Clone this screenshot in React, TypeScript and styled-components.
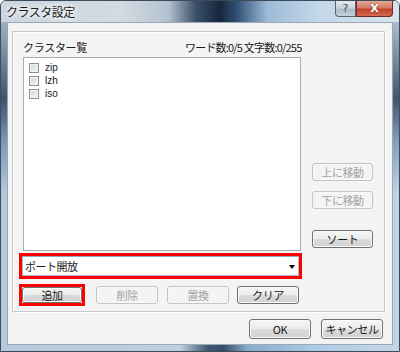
import React from "react";
import styled, { createGlobalStyle } from "styled-components";

const Global = createGlobalStyle`
  html, body { margin: 0; padding: 0; background: #ffffff; }
  body { font-family: "Noto Sans CJK JP", "Noto Sans", sans-serif; }
  * { box-sizing: border-box; }
`;

const FONT = `"Noto Sans CJK JP", "Noto Sans", sans-serif`;

const Window = styled.div`
  width: 400px;
  height: 352px;
  display: flex;
  flex-direction: column;
  border: 1px solid #3c4b5a;
  border-radius: 6px 6px 0 0;
  background:
    linear-gradient(180deg, rgba(20, 40, 70, 0.0) 0%, rgba(20, 40, 70, 0.75) 28%, rgba(60, 100, 150, 0.5) 40%, rgba(150, 190, 225, 0.2) 55%, rgba(170, 200, 230, 0.2) 100%),
    linear-gradient(90deg, #b9cbdb 0%, #c3d2df 45%, #243a55 52%, #1b2f48 56%, #7fa4c6 62%, #b2cde4 80%, #c9d9e6 100%);
  overflow: hidden;
`;

const TitleBar = styled.div`
  height: 21px;
  display: flex;
  align-items: flex-start;
  justify-content: space-between;
  background: linear-gradient(90deg, #c9d4de 0%, #d2dbe2 30%, #b4c2d0 42%, #3a4f68 49%, #16273d 55%, #2f4d72 59%, #9dbcd8 67%, #c4d8e9 80%, #d7e3ec 100%);
`;

const Title = styled.div`
  font-family: ${FONT};
  font-size: 12px;
  line-height: 16px;
  color: #1a1a1a;
  padding: 3px 0 0 5px;
  letter-spacing: -0.5px;
  text-shadow: 0 0 4px #ffffff, 0 0 6px #ffffff, 0 0 8px #ffffff;
`;

const Caption = styled.div`
  display: flex;
  margin-right: 6px;
`;

const CapButton = styled.div<{ $close?: boolean }>`
  height: 16px;
  width: ${(p) => (p.$close ? "37px" : "21px")};
  display: flex;
  align-items: center;
  justify-content: center;
  border: 1px solid ${(p) => (p.$close ? "#6d2a22" : "#5a6674")};
  border-top: none;
  border-radius: ${(p) => (p.$close ? "0 0 4px 0" : "0 0 0 4px")};
  background: ${(p) =>
    p.$close
      ? "linear-gradient(180deg, #e6a999 0%, #d47b66 45%, #c0432b 55%, #d26a4e 100%)"
      : "linear-gradient(180deg, #e4eaf0 0%, #c9d3dd 45%, #aebccb 55%, #c3d0dc 100%)"};
  color: ${(p) => (p.$close ? "#ffffff" : "#3b4a5a")};
  font-family: "DejaVu Sans", sans-serif;
  font-size: 11px;
  font-weight: ${(p) => (p.$close ? 700 : 400)};
  text-shadow: ${(p) => (p.$close ? "0 0 2px #6b1c10" : "none")};
`;

const Client = styled.div`
  flex: 1;
  margin: 0 6px 6px 6px;
  border: 1px solid #9aa8b6;
  background-color: #f0f0f0;
  background-image:
    linear-gradient(45deg, #f6f6f6 25%, transparent 25%, transparent 75%, #f6f6f6 75%),
    linear-gradient(45deg, #f6f6f6 25%, transparent 25%, transparent 75%, #f6f6f6 75%);
  background-size: 2px 2px;
  background-position: 0 0, 1px 1px;
  display: flex;
  flex-direction: column;
  padding: 8px 7px 0 4px;
`;

const Group = styled.div`
  height: 281px;
  border: 1px solid #c9c9c9;
  box-shadow: inset 1px 1px 0 #ffffff, 1px 1px 0 #ffffff;
  background: #f4f4f4;
  display: flex;
  flex-direction: column;
  padding: 6px 10px 0 10px;
`;

const HeaderRow = styled.div`
  display: flex;
  height: 18px;
  align-items: center;
  font-family: ${FONT};
  font-size: 11px;
  line-height: 14px;
  color: #1a1a1a;
`;

const Label = styled.span`
  width: 162px;
  letter-spacing: -0.3px;
`;

const Counts = styled.span`
  letter-spacing: -0.8px;
`;

const MainRow = styled.div`
  display: flex;
  margin-top: 1px;
`;

const ListBox = styled.div`
  width: 278px;
  height: 194px;
  background: #ffffff;
  border: 1px solid #a9adb3;
  padding: 3px 0 0 5px;
  display: flex;
  flex-direction: column;
`;

const Item = styled.label`
  display: flex;
  align-items: center;
  height: 13px;
  line-height: 12px;
  font-family: "Liberation Sans", Arial, sans-serif;
  font-size: 10px;
  color: #1a1a1a;
`;

const Check = styled.span`
  width: 10px;
  height: 10px;
  border: 1px solid #8e8f8f;
  background: linear-gradient(135deg, #d4d4d4 0%, #e6e6e6 50%, #f6f6f6 100%);
  box-shadow: inset 0 0 0 1px #f4f4f4;
  margin-right: 6px;
`;

const SideCol = styled.div`
  display: flex;
  flex-direction: column;
  align-items: flex-start;
  padding-top: 106px;
  margin-left: 11px;
`;

const Btn = styled.div<{ $w?: number; $h?: number; $disabled?: boolean; $gapTop?: number; $gapLeft?: number }>`
  width: ${(p) => p.$w ?? 61}px;
  height: ${(p) => p.$h ?? 18}px;
  margin-top: ${(p) => p.$gapTop ?? 0}px;
  margin-left: ${(p) => p.$gapLeft ?? 0}px;
  display: flex;
  align-items: center;
  justify-content: center;
  border: 1px solid ${(p) => (p.$disabled ? "#c2c5c8" : "#707070")};
  border-radius: 3px;
  background: ${(p) =>
    p.$disabled
      ? "#f4f4f4"
      : "linear-gradient(180deg, #f6f6f6 0%, #ececec 48%, #dcdcdc 52%, #d0d0d0 100%)"};
  box-shadow: inset 0 0 0 1px ${(p) => (p.$disabled ? "#f8f8f8" : "#fbfbfb")};
  font-family: ${FONT};
  font-size: 11px;
  line-height: 14px;
  letter-spacing: -0.4px;
  color: ${(p) => (p.$disabled ? "#a3a3a3" : "#1a1a1a")};
`;

const Highlight = styled.div`
  border: 3px solid #ff0000;
`;

const ComboWrap = styled(Highlight)`
  margin-top: 2px;
  margin-left: -4px;
  width: 283px;
  height: 26px;
`;

const Combo = styled.div`
  height: 20px;
  background: #ffffff;
  border: 1px solid #a5b9cf;
  border-top-color: #8fa8c3;
  display: flex;
  align-items: center;
  justify-content: space-between;
  padding: 0 3px 0 2px;
  font-family: ${FONT};
  font-size: 11px;
  line-height: 14px;
  letter-spacing: -0.5px;
  color: #1a1a1a;
`;

const Arrow = styled.span`
  width: 0;
  height: 0;
  border-left: 3px solid transparent;
  border-right: 3px solid transparent;
  border-top: 4px solid #000000;
  margin-top: 2px;
`;

const ButtonRow = styled.div`
  display: flex;
  align-items: center;
  margin-top: 5px;
  margin-left: -4px;
`;

const AddWrap = styled(Highlight)`
  margin-right: 11px;
  display: flex;
`;

const Footer = styled.div`
  display: flex;
  justify-content: flex-end;
  gap: 10px;
  margin-top: 7px;
  padding-right: 2px;
`;

export default function App() {
  return (
    <>
      <Global />
      <Window>
        <TitleBar>
          <Title>クラスタ設定</Title>
          <Caption>
            <CapButton>?</CapButton>
            <CapButton $close>X</CapButton>
          </Caption>
        </TitleBar>
        <Client>
          <Group>
            <HeaderRow>
              <Label>クラスター覧</Label>
              <Counts>ワード数:0/5 文字数:0/255</Counts>
            </HeaderRow>
            <MainRow>
              <ListBox>
                {["zip", "lzh", "iso"].map((t) => (
                  <Item key={t}>
                    <Check />
                    {t}
                  </Item>
                ))}
              </ListBox>
              <SideCol>
                <Btn $disabled>上に移動</Btn>
                <Btn $disabled $gapTop={10}>下に移動</Btn>
                <Btn $gapTop={21}>ソート</Btn>
              </SideCol>
            </MainRow>
            <ComboWrap>
              <Combo>
                <span>ポート開放</span>
                <Arrow />
              </Combo>
            </ComboWrap>
            <ButtonRow>
              <AddWrap>
                <Btn $w={60} $h={16}>追加</Btn>
              </AddWrap>
              <Btn $w={62} $disabled>削除</Btn>
              <Btn $w={62} $disabled $gapLeft={9}>置換</Btn>
              <Btn $w={62} $gapLeft={8}>クリア</Btn>
            </ButtonRow>
          </Group>
          <Footer>
            <Btn $w={62} $h={20}>OK</Btn>
            <Btn $w={62} $h={20}>キャンセル</Btn>
          </Footer>
        </Client>
      </Window>
    </>
  );
}
